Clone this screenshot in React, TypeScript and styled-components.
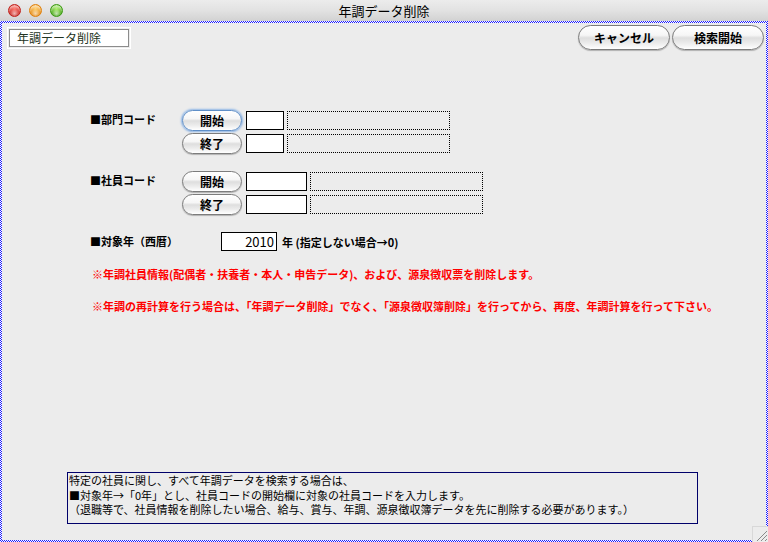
import React from "react";
import styled, { createGlobalStyle, css } from "styled-components";

const GlobalStyle = createGlobalStyle`
  html, body {
    margin: 0;
    padding: 0;
    background: #ececec;
  }
  body {
    font-family: "Noto Sans CJK JP", "Noto Sans", sans-serif;
    color: #000;
  }
`;

const Window = styled.div`
  width: 768px;
  height: 542px;
  display: flex;
  flex-direction: column;
  position: relative;
  overflow: hidden;
`;

const TitleBar = styled.div`
  height: 21px;
  flex: none;
  position: relative;
  display: flex;
  align-items: center;
  justify-content: center;
  background: linear-gradient(#ececec, #e2e2e2 50%, #d2d2d2);
  font-size: 13px;
  line-height: 21px;
`;

const Lights = styled.div`
  position: absolute;
  left: 8px;
  top: 4px;
  display: flex;
  gap: 8px;
`;

const Light = styled.span<{ $c: string; $d: string }>`
  width: 13px;
  height: 13px;
  border-radius: 50%;
  box-sizing: border-box;
  border: 1px solid ${(p) => p.$d};
  background: radial-gradient(circle at 50% 78%, #fff9 0, transparent 45%),
    radial-gradient(circle at 50% 30%, ${(p) => p.$c} 0, ${(p) => p.$d} 90%);
  box-shadow: inset 0 2px 2px rgba(255, 255, 255, 0.55);
`;

const Frame = styled.div`
  flex: 1;
  padding: 2px;
  background: repeating-conic-gradient(#1a1aff 0 25%, #ffffff 0 50%) 0 0 / 2px 2px;
  display: flex;
`;

const Panel = styled.div`
  flex: 1;
  background: #ececec;
  display: flex;
  flex-direction: column;
`;

const TopRow = styled.div`
  display: flex;
  align-items: flex-start;
  padding: 2px 2px 0 5px;
`;

const TitleLabel = styled.div`
  border: 1px solid #fff;
  margin-top: 2px;
  padding: 1px;
  div {
    width: 111px;
    height: 16px;
    border: 1px solid #8c8c8c;
    background: #fff;
    font-size: 12px;
    line-height: 16px;
    padding-left: 7px;
    box-sizing: content-box;
    color: #223322;
  }
`;

const Spacer = styled.div`
  flex: 1;
`;

const Button = styled.button<{ $w: number; $h: number; $focus?: boolean }>`
  width: ${(p) => p.$w}px;
  height: ${(p) => p.$h}px;
  padding: 0;
  font-family: inherit;
  font-size: 12px;
  font-weight: 700;
  color: #000;
  border: 1px solid #7c7c7c;
  border-radius: ${(p) => p.$h / 2}px;
  background: linear-gradient(#ffffff, #f6f6f6 40%, #dedede 52%, #ececec 75%, #ffffff);
  box-shadow: 0 1px 1px rgba(0, 0, 0, 0.25);
  line-height: 1;
  ${(p) =>
    p.$focus &&
    css`
      border-color: #5f8fc8;
      box-shadow: 0 0 2px 1px #8fb6e6;
    `}
`;

const TopButtons = styled.div`
  display: flex;
  gap: 2px;
`;

const Form = styled.div`
  margin-top: 60px;
  padding-left: 88px;
  display: flex;
  flex-direction: column;
`;

const Group = styled.div<{ $mt: number }>`
  display: flex;
  align-items: flex-start;
  margin-top: ${(p) => p.$mt}px;
`;

const Label = styled.div<{ $w: number; $lh?: number }>`
  width: ${(p) => p.$w}px;
  flex: none;
  font-size: 11px;
  font-weight: 700;
  line-height: ${(p) => p.$lh ?? 19}px;
`;

const Rows = styled.div`
  display: flex;
  flex-direction: column;
  gap: 2px;
`;

const Row = styled.div`
  display: flex;
  align-items: center;
  height: 21px;
`;

const Input = styled.div<{ $w: number }>`
  width: ${(p) => p.$w}px;
  height: 19px;
  box-sizing: border-box;
  border: 1px solid #000;
  background: #fff;
  margin-left: 4px;
  font-size: 13px;
  line-height: 17px;
  text-align: right;
  padding-right: 2px;
`;

const NameBox = styled.div<{ $w: number }>`
  width: ${(p) => p.$w}px;
  height: 19px;
  box-sizing: border-box;
  border: 1px dotted #000;
  margin-left: 3px;
`;

const YearInput = styled(Input)`
  margin-left: 0;
`;

const Note = styled.span`
  font-size: 11px;
  font-weight: 700;
  margin-left: 5px;
`;

const Warning = styled.div<{ $mt: number }>`
  margin-top: ${(p) => p.$mt}px;
  margin-left: 2px;
  font-size: 11px;
  font-weight: 700;
  line-height: 16px;
  color: #f00;
  white-space: nowrap;
`;

const InfoBox = styled.div`
  margin: auto 0 16px 65px;
  width: 631px;
  height: 52px;
  box-sizing: border-box;
  border: 1px solid #00006a;
  padding: 0 0 0 1px;
  font-size: 11px;
  line-height: 14.5px;
  white-space: nowrap;
`;

const Grip = styled.div`
  position: absolute;
  right: 0;
  bottom: 0;
  width: 15px;
  height: 15px;
  background: #ececec;
  border-top: 1px solid #d8d8d8;
  border-left: 1px solid #d8d8d8;
  svg {
    display: block;
  }
`;

function CodeGroup({
  label,
  mt,
  inputW,
  nameW,
  focusFirst,
}: {
  label: string;
  mt: number;
  inputW: number;
  nameW: number;
  focusFirst?: boolean;
}) {
  return (
    <Group $mt={mt}>
      <Label $w={92}>{label}</Label>
      <Rows>
        <Row>
          <Button $w={60} $h={21} $focus={focusFirst}>
            開始
          </Button>
          <Input $w={inputW} />
          <NameBox $w={nameW} />
        </Row>
        <Row>
          <Button $w={60} $h={21}>
            終了
          </Button>
          <Input $w={inputW} />
          <NameBox $w={nameW} />
        </Row>
      </Rows>
    </Group>
  );
}

export default function App() {
  return (
    <Window>
      <GlobalStyle />
      <TitleBar>
        <Lights>
          <Light $c="#ff7a70" $d="#c0201a" />
          <Light $c="#ffd070" $d="#e0800a" />
          <Light $c="#b0f070" $d="#3a9a10" />
        </Lights>
        年調データ削除
      </TitleBar>
      <Frame>
        <Panel>
          <TopRow>
            <TitleLabel>
              <div>年調データ削除</div>
            </TitleLabel>
            <Spacer />
            <TopButtons>
              <Button $w={92} $h={25}>キャンセル</Button>
              <Button $w={92} $h={25}>検索開始</Button>
            </TopButtons>
          </TopRow>
          <Form>
            <CodeGroup label="■部門コード" mt={0} inputW={38} nameW={163} focusFirst />
            <CodeGroup label="■社員コード" mt={17} inputW={61} nameW={173} />
            <Group $mt={16}>
              <Label $w={131} $lh={21}>■対象年（西暦）</Label>
              <Row>
                <YearInput $w={56}>2010</YearInput>
                <Note>年 (指定しない場合→0)</Note>
              </Row>
            </Group>
            <Warning $mt={14}>
              ※年調社員情報(配偶者・扶養者・本人・申告データ)、および、源泉徴収票を削除します。
            </Warning>
            <Warning $mt={16}>
              ※年調の再計算を行う場合は、「年調データ削除」でなく、「源泉徴収簿削除」を行ってから、再度、年調計算を行って下さい。
            </Warning>
          </Form>
          <InfoBox>
            特定の社員に関し、すべて年調データを検索する場合は、
            <br />
            ■対象年→「0年」とし、社員コードの開始欄に対象の社員コードを入力します。
            <br />
            （退職等で、社員情報を削除したい場合、給与、賞与、年調、源泉徴収簿データを先に削除する必要があります。）
          </InfoBox>
        </Panel>
      </Frame>
      <Grip>
        <svg width="15" height="15" viewBox="0 0 15 15">
          <path d="M14 4 L4 14 M14 8 L8 14 M14 12 L12 14" stroke="#8a8a8a" strokeWidth="1" />
        </svg>
      </Grip>
    </Window>
  );
}
